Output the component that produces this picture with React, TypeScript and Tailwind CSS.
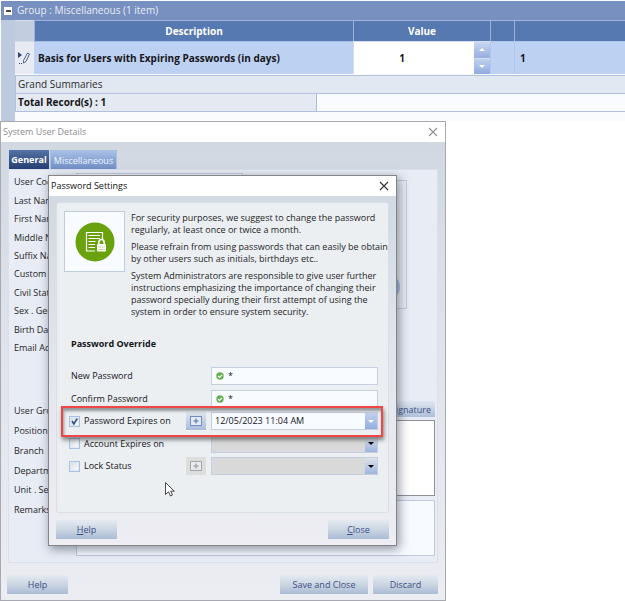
import React from "react";

const nameFields = [
  "User Code",
  "Last Name",
  "First Name",
  "Middle Name",
  "Suffix Name",
  "Custom",
  "Civil Status",
  "Sex . Gender",
  "Birth Date",
  "Email Address",
];

const accessFields = ["User Group", "Position", "Branch", "Department", "Unit . Section", "Remarks"];

const buttonStyle =
  "h-[19px] rounded-[1px] bg-linear-to-b from-[#e4eaf0] via-[#cbd6e3] to-[#aabbd4] text-center text-[9px] leading-[19px] text-[#3c4f84]";

function CloseIcon({ className }: { className: string }) {
  return (
    <svg viewBox="0 0 10 10" className={className} fill="none" stroke="currentColor" strokeWidth="1.1">
      <path d="M1 1 9 9M9 1 1 9" />
    </svg>
  );
}

function Caret({ up = false, className }: { up?: boolean; className: string }) {
  return (
    <svg viewBox="0 0 6 3" className={className} fill="currentColor">
      <path d={up ? "M0 3 3 0 6 3Z" : "M0 0H6L3 3Z"} />
    </svg>
  );
}

function FieldLabels({ names, className }: { names: string[]; className: string }) {
  return (
    <div className={`${className} flex w-[67px] shrink-0 flex-col pl-[5px] whitespace-nowrap`}>
      {names.map((name) => (
        <label key={name} htmlFor={name} className="flex flex-1 items-center">
          {name}
        </label>
      ))}
    </div>
  );
}

function SettingsTable() {
  const head = "h-[21px] border-t border-l border-[#9db3d8] bg-[#5679b1] p-0 text-center font-bold text-white";
  return (
    <section className="h-[121px] overflow-hidden bg-[#fafbfd] pt-px pl-px">
      <div className="flex h-[19px] items-center bg-[#7890c0] pl-[3px] text-[10px] text-[#e7ecf6]">
        <button aria-label="Collapse group" className="flex size-[8px] items-center justify-center bg-white">
          <span className="h-[2px] w-[5px] bg-[#4a4a4a]" />
        </button>
        <span className="pl-[5px]">Group : Miscellaneous (1 item)</span>
      </div>
      <div className="flex">
        <div className="h-[101px] w-[14px] shrink-0 bg-[#bdcadf]" />
        <div className="min-w-0 flex-1">
          <table className="w-full table-fixed border-separate border-spacing-0 text-[10px] font-bold">
            <colgroup>
              <col className="w-[19px]" />
              <col className="w-[319px]" />
              <col className="w-[137px]" />
              <col className="w-[24px]" />
              <col />
            </colgroup>
            <thead>
              <tr>
                <th className="h-[21px] border-t border-[#d5ddeb] bg-[#c2cde0] p-0" />
                <th className={head}>Description</th>
                <th className={head}>Value</th>
                <th className={head} />
                <th className={head} />
              </tr>
            </thead>
            <tbody>
              <tr className="bg-[#bdd1f3]">
                <td className="h-[33px] border-t border-[#d5ddeb] bg-[#e8ebf3] p-0">
                  <svg viewBox="0 0 12 12" className="ml-[3px] size-[12px]" fill="none" stroke="#2c4475">
                    <path d="M0 0 4 3 0 6Z" fill="#2c4475" stroke="none" />
                    <path d="M9.500 1 11.500 2 8 9.500 5.500 11 5.500 8.500Z" strokeWidth=".8" />
                    <path d="M1 11.500H5" strokeDasharray="1 1" />
                  </svg>
                </td>
                <td className="border-t border-[#a5bce2] p-0 pl-[4px]">Basis for Users with Expiring Passwords (in days)</td>
                <td className="border-t border-l border-[#d2def3] bg-white p-0">
                  <div className="flex h-[32px]">
                    <input aria-label="Value" defaultValue="1" className="min-w-0 flex-1 pr-[24px] text-center outline-none" />
                    <div className="flex w-[16px] flex-col text-white">
                      <button aria-label="Increase" className="flex flex-1 items-center justify-center bg-linear-to-b from-[#c9d7f0] to-[#95afe0]">
                        <Caret up className="h-[3px] w-[6px]" />
                      </button>
                      <button aria-label="Decrease" className="flex flex-1 items-center justify-center border-t border-[#d4def2] bg-linear-to-b from-[#bfd0ee] to-[#8fabdf]">
                        <Caret className="h-[3px] w-[6px]" />
                      </button>
                    </div>
                  </div>
                </td>
                <td className="border-t border-l border-[#b2c7ec] p-0" />
                <td className="border-t border-l border-[#b2c7ec] p-0 pl-[5px]">1</td>
              </tr>
            </tbody>
          </table>
          <div className="mt-px flex h-[18px] items-center border-t border-l border-[#b1c1db] bg-[#e1e8f1] pl-[2px] text-[10px] text-[#2c2c2c]">
            Grand Summaries
          </div>
          <div className="flex h-[19px] border-y border-l border-[#b1c1db] bg-[#fafbfe] text-[10px] font-bold">
            <div className="flex w-[301px] items-center border-r border-[#a9bbd8] bg-[#e5e9f1] pl-[2px]">Total Record(s) : 1</div>
          </div>
        </div>
      </div>
    </section>
  );
}

function SecurityBadge() {
  return (
    <div className="flex size-[61px] shrink-0 items-center justify-center border border-[#c0cbdd] bg-[#f8fbff]">
      <svg viewBox="0 0 40 40" className="size-[40px]">
        <circle cx="20" cy="20" r="19.500" fill="#69a20c" />
        <path d="M11.500 10.500H27.500V17M11.500 10V29H20" fill="none" stroke="#fff" strokeWidth="1.200" />
        <path d="M13.500 13.500H25M13.500 16.500H25M13.500 19.500H20.500M13.500 22.500H20M13.500 25.500H20" stroke="#fff" strokeWidth="1.100" />
        <path d="M23.800 22V20.500A2.700 3 0 0 1 29.200 20.500V22" fill="none" stroke="#fff" strokeWidth="1.600" />
        <rect x="22" y="22" width="9" height="7.500" rx=".8" fill="#fff" />
        <path d="M23.500 25H29.500M23.500 27.500H29.500" stroke="#69a20c" strokeWidth=".7" strokeDasharray="1 .8" />
      </svg>
    </div>
  );
}

function PasswordField({ id, label }: { id: string; label: string }) {
  return (
    <div className="flex h-[18px] items-center">
      <label htmlFor={id} className="w-[142px] pl-[2px]">
        {label}
      </label>
      <div className="flex h-[18px] min-w-0 flex-1 items-center border border-[#c6cfdf] bg-[#f8fbff] pl-[4px]">
        <svg viewBox="0 0 8 8" className="size-[8px] shrink-0">
          <circle cx="4" cy="4" r="3.700" fill="#63b052" />
          <path d="M2 4 3.500 5.500 6 2.800" fill="none" stroke="#fff" strokeWidth="1.200" />
        </svg>
        <input id={id} type="text" defaultValue="*" className="min-w-0 flex-1 pl-[4px] text-[9px] outline-none" />
      </div>
    </div>
  );
}

function OverrideRow({ id, label, value, withButton }: { id: string; label: string; value?: string; withButton?: boolean }) {
  const active = value !== undefined;
  return (
    <div className="flex h-[18px] items-center">
      <span className="relative size-[11px] shrink-0">
        <input
          id={id}
          type="checkbox"
          defaultChecked={active}
          className="peer block size-[11px] appearance-none border border-[#a9c0de] bg-linear-to-br from-[#d5d9df] to-white ring-1 ring-[#dfe8f5] ring-inset"
        />
        <svg viewBox="0 0 11 11" className="pointer-events-none absolute inset-0 hidden size-[11px] peer-checked:block">
          <path d="M3 5 4.800 8 8.300 2.500" fill="none" stroke="#2f4a86" strokeWidth="1.500" />
        </svg>
      </span>
      <label htmlFor={id} className="w-[102px] pl-[4px] whitespace-nowrap">
        {label}
      </label>
      <div className="w-[29px] shrink-0 pl-[4px]">
        {withButton && (
          <button
            aria-label={`Add ${label}`}
            className={
              active
                ? "flex h-[18px] w-[20px] items-center justify-center bg-linear-to-b from-[#dfe6ef] to-[#a9bcd9] text-[#6f8fc4]"
                : "flex h-[18px] w-[20px] items-center justify-center bg-[#dcdddd] text-[#a6a6a6]"
            }
          >
            <svg viewBox="0 0 12 10" className="h-[10px] w-[12px]" fill="none" stroke="currentColor">
              <rect x=".5" y=".5" width="11" height="9" fill="#e6ebf2" />
              <path d="M6 2.500V7.500M3.500 5H8.500" strokeWidth="1.500" />
            </svg>
          </button>
        )}
      </div>
      <div
        className={
          active
            ? "flex h-[18px] min-w-0 flex-1 items-stretch border border-[#c6cfdf] bg-[#f8fbff]"
            : "flex h-[18px] min-w-0 flex-1 items-stretch border border-[#c6cfdf] bg-[#d9d9d9]"
        }
      >
        <select aria-label={`${label} value`} disabled={!active} className="min-w-0 flex-1 appearance-none pl-[3px] text-[9px] outline-none">
          <option>{value ?? ""}</option>
        </select>
        <span
          className={
            active
              ? "flex w-[12px] items-center justify-center bg-linear-to-b from-[#c3d2ee] to-[#93ade0] text-white"
              : "flex w-[12px] items-center justify-center bg-linear-to-b from-[#dfe2e8] to-[#9db5df] text-black"
          }
        >
          <Caret className="h-[3px] w-[6px]" />
        </span>
      </div>
    </div>
  );
}

function PasswordDialog() {
  return (
    <div
      role="dialog"
      aria-label="Password Settings"
      className="absolute top-[53px] left-[47px] w-[349px] border border-[#858589] bg-white shadow-[2px_3px_10px_rgba(30,40,60,0.5)]"
    >
      <div className="flex h-[20px] items-center justify-between pr-[7px] pl-[2px] text-[9px] text-[#111111]">
        <h2>Password Settings</h2>
        <button aria-label="Close dialog">
          <CloseIcon className="size-[10px] text-[#333333]" />
        </button>
      </div>
      <div className="bg-linear-to-b from-[#d1d9e3] via-[#e6e8ef] via-60% to-[#ededf3] px-[7px] pt-[6px] pb-[6px]">
        <div className="h-[311px] rounded-[3px] border border-[#dadfe7] bg-[#ebeff2] px-[7px] pt-[8px]">
          <div className="flex gap-[6px]">
            <SecurityBadge />
            <div className="flex flex-1 flex-col gap-[5px] pt-px text-[9px] leading-[12px] whitespace-nowrap text-[#1e1e26]">
              <p>
                For security purposes, we suggest to change the password
                <br />
                regularly, at least once or twice a month.
              </p>
              <p>
                Please refrain from using passwords that can easily be obtain
                <br />
                by other users such as initials, birthdays etc..
              </p>
              <p>
                System Administrators are responsible to give user further
                <br />
                instructions emphasizing the importance of changing their
                <br />
                password specially during their first attempt of using the
                <br />
                system in order to ensure system security.
              </p>
            </div>
          </div>
          <h3 className="mt-[20px] pl-[7px] text-[9px] leading-[12px] font-bold">Password Override</h3>
          <div className="mt-[17px] mr-[3px] ml-[5px] flex h-[108px] flex-col justify-between text-[9px]">
            <PasswordField id="new-password" label="New Password" />
            <PasswordField id="confirm-password" label="Confirm Password" />
            <OverrideRow id="password-expires" label="Password Expires on" value="12/05/2023 11:04 AM" withButton />
            <OverrideRow id="account-expires" label="Account Expires on" />
            <OverrideRow id="lock-status" label="Lock Status" withButton />
          </div>
        </div>
        <div className="mt-[7px] flex justify-between">
          <button className={`${buttonStyle} w-[61px]`}>
            <u>H</u>elp
          </button>
          <button className={`${buttonStyle} w-[61px]`}>
            <u>C</u>lose
          </button>
        </div>
      </div>
      <div className="pointer-events-none absolute top-[230px] left-[12px] h-[31px] w-[322px] border-2 border-[#f04646] shadow-[1px_3px_4px_rgba(60,60,60,0.6),inset_1px_3px_3px_rgba(60,60,60,0.5)]" />
      <svg viewBox="0 0 10 15" className="pointer-events-none absolute top-[306px] left-[116px] h-[15px] w-[10px]">
        <path d="M.5 .5V12.500L3.500 9.800 5.500 14 7.500 13 5.600 9.200H9.300Z" fill="#fff" stroke="#333" strokeWidth=".9" />
      </svg>
    </div>
  );
}

function UserDetailsWindow() {
  return (
    <main className="relative w-full max-w-[446px] border border-[#a8a9b0] bg-white">
      <div className="flex h-[20px] items-center justify-between pr-[7px] pl-[2px] text-[9px] text-[#8c8c90]">
        <h1>System User Details</h1>
        <button aria-label="Close window">
          <CloseIcon className="size-[10px] text-[#8f8f93]" />
        </button>
      </div>
      <div className="bg-linear-to-b from-[#d1d8e2] via-[#e0e3eb] via-45% to-[#ecedf3] pt-[8px] pr-[7px] pb-[6px] pl-[6px]">
        <div role="tablist" className="ml-[2px] flex gap-px text-[9px] leading-[18px]">
          <button role="tab" aria-selected="true" className="h-[19px] w-[40px] bg-linear-to-b from-[#5573a6] to-[#263f72] text-center font-bold text-white">
            General
          </button>
          <button role="tab" aria-selected="false" className="h-[19px] w-[67px] border border-b-0 border-[#a9bde2] bg-linear-to-b from-[#a8bfe6] to-[#708fc6] text-center leading-[17px] text-[#eef3fc]">
            Miscellaneous
          </button>
        </div>
        <div className="ml-px h-[394px] border border-[#dadfe8] bg-[#e8ecf5] pt-[3px] text-[9px] text-[#1e1e26]">
          <div className="flex h-[184px]">
            <FieldLabels names={nameFields} className="h-[184px]" />
            <div className="flex w-[167px] flex-col gap-[2px]">
              {nameFields.map((name) => (
                <input key={name} id={name} className="min-h-0 w-full flex-1 border border-[#c1cadc] bg-[#f4f7fd] outline-none" />
              ))}
            </div>
            <div className="mt-[7px] mr-[30px] ml-[14px] flex h-[129px] flex-1 items-end justify-end border border-[#c1cadc] bg-[#e9edf5] pr-[6px] pb-[8px]">
              <span className="size-[26px] rounded-full bg-[#a9bfdf]" />
            </div>
          </div>
          <div className="mt-[44px] flex">
            <FieldLabels names={accessFields} className="h-[119px]" />
            <div className="mr-[2px] flex flex-1 flex-col">
              <button className="h-[16px] w-[64px] self-end bg-linear-to-b from-[#dfe6f0] to-[#b0c0d9] pr-[4px] text-right leading-[15px] text-[#3c4f84]">
                Signature
              </button>
              <div className="mt-[3px] h-[76px] border border-[#8e9097] bg-white" />
              <textarea id="Remarks" className="mt-[4px] h-[56px] resize-none border border-[#c1cadc] bg-[#f7faff] outline-none" />
            </div>
          </div>
        </div>
        <div className="mt-[12px] flex gap-[5px]">
          <button className={`${buttonStyle} w-[61px]`}>Help</button>
          <button className={`${buttonStyle} ml-auto w-[88px]`}>Save and Close</button>
          <button className={`${buttonStyle} w-[65px]`}>Discard</button>
        </div>
      </div>
      <PasswordDialog />
    </main>
  );
}

export default function App() {
  return (
    <div className="bg-white font-['Open_Sans','Noto_Sans',sans-serif] text-[#15151a]">
      <SettingsTable />
      <UserDetailsWindow />
    </div>
  );
}
